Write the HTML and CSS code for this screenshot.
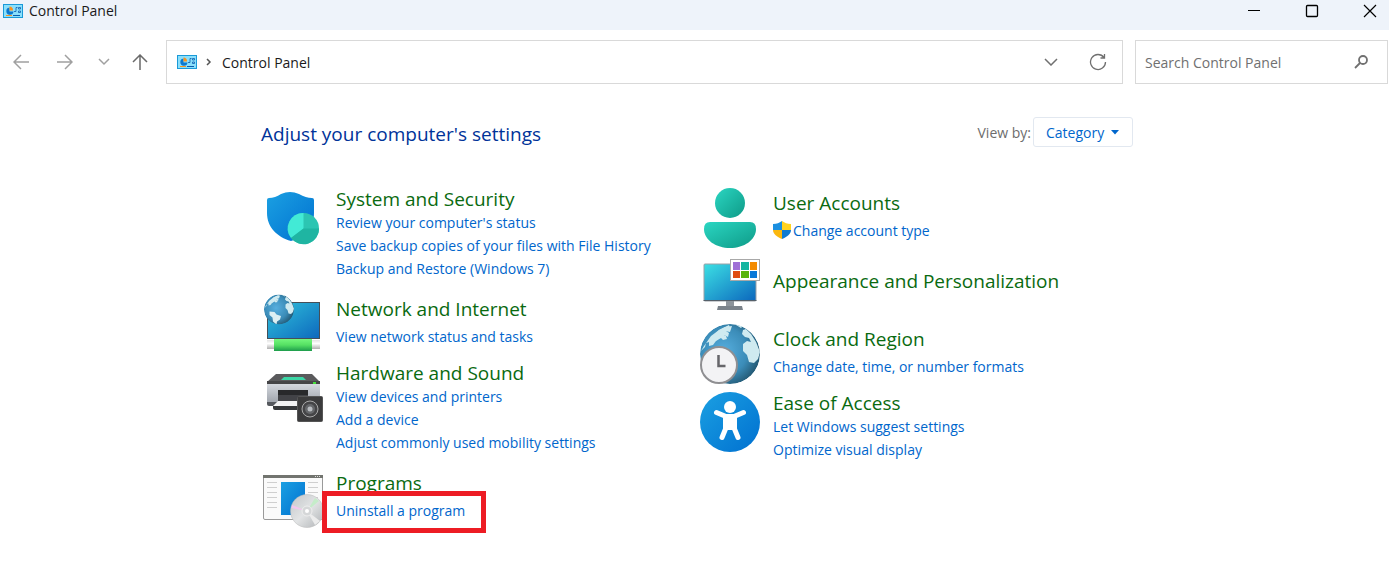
FILE: index.html
```html
<!DOCTYPE html>
<html lang="en">
<head>
    <meta charset="UTF-8">
    <meta name="viewport" content="width=device-width, initial-scale=1.0">
    <title>Control Panel</title>
    <link rel="stylesheet" href="styles.css">
</head>
<body>
<!-- shared gradients and symbols -->
<svg class="defs" aria-hidden="true">
    <defs>
        <linearGradient id="blue" x1="0" y1="0" x2="1" y2="1"><stop offset="0" stop-color="#1ba0e2"/><stop offset="1" stop-color="#0070d0"/></linearGradient>
        <linearGradient id="screen" x1="0" y1="0" x2="1" y2="1"><stop offset="0" stop-color="#3ce0e4"/><stop offset="1" stop-color="#0b66bd"/></linearGradient>
        <linearGradient id="screen-dark" x1="0" y1="0" x2="1" y2="1"><stop offset="0" stop-color="#30c4dc"/><stop offset="1" stop-color="#0d68bd"/></linearGradient>
        <linearGradient id="teal" x1="0" y1="0" x2="1" y2="1"><stop offset="0" stop-color="#2bd6c2"/><stop offset="1" stop-color="#0e9a87"/></linearGradient>
        <linearGradient id="green" x1="0" y1="0" x2="0" y2="1"><stop offset="0" stop-color="#74f67c"/><stop offset=".5" stop-color="#55e063"/><stop offset="1" stop-color="#1d9c4c"/></linearGradient>
        <linearGradient id="grey" x1="0" y1="0" x2="0" y2="1"><stop offset="0" stop-color="#d4d8de"/><stop offset="1" stop-color="#9ba0a8"/></linearGradient>
        <linearGradient id="pipe" x1="0" y1="0" x2="0" y2="1"><stop offset="0" stop-color="#e2e2e2"/><stop offset=".4" stop-color="#fff"/><stop offset="1" stop-color="#b0b0b0"/></linearGradient>
        <linearGradient id="disc" x1="0" y1="0" x2="1" y2="1"><stop offset="0" stop-color="#c2c5c8"/><stop offset=".5" stop-color="#e2e4e5"/><stop offset="1" stop-color="#aeb1b4"/></linearGradient>
        <radialGradient id="ocean" cx=".4" cy=".45" r=".65"><stop offset="0" stop-color="#56aede"/><stop offset=".6" stop-color="#3b8cb8"/><stop offset="1" stop-color="#1f5068"/></radialGradient>
        <clipPath id="round"><circle cx="32" cy="31" r="30"/></clipPath>
        <symbol id="cpl" viewBox="0 0 20 14">
            <rect x=".5" y=".5" width="19" height="13" fill="#8adffb" stroke="#1a9ad8"/>
            <path d="M6.5 3.5a3.6 3.6 0 1 0 4 4h-4z" fill="#0b78d0"/>
            <path d="M6.500 2.500v4h3.500a3.800 3.800 0 0 0-3.500-4z" fill="#f7931e"/>
            <path d="M11 7.500h2v-4h1.500M15.500 3.500h2v1.500h-2zM15.500 7h2v1.500h-2z" fill="none" stroke="#0b5cad" stroke-width=".8"/>
            <path d="M3 11.500h6" stroke="#f7931e"/><path d="M10 11.500h7" stroke="#0b5cad"/>
        </symbol>
    </defs>
</svg>

<header class="titlebar">
    <svg class="cpl-icon" aria-hidden="true"><use href="#cpl"/></svg>
    <h1>Control Panel</h1>
    <div class="window-buttons">
        <button aria-label="Minimize"><svg width="14" height="14"><path d="M1 6.500h12" stroke="#000" stroke-width="1"/></svg></button>
        <button aria-label="Maximize"><svg width="14" height="14"><rect x="1.500" y="1.500" width="11" height="11" rx="1" fill="none" stroke="#000" stroke-width="1.300"/></svg></button>
        <button aria-label="Close"><svg width="14" height="14"><path d="M1 1l12 12M13 1L1 13" stroke="#000" stroke-width="1.200"/></svg></button>
    </div>
</header>

<nav class="toolbar">
    <div class="history">
        <button aria-label="Back"><svg width="16" height="16"><path d="M16 8H1M8 1L1 8l7 7" stroke="#a0a0a0"/></svg></button>
        <button aria-label="Forward"><svg width="16" height="16"><path d="M0 8h15M8 1l7 7-7 7" stroke="#a0a0a0"/></svg></button>
        <button class="slim" aria-label="Recent locations"><svg width="12" height="8"><path d="M1 1l5 5 5-5" stroke="#a0a0a0"/></svg></button>
        <button class="slim up" aria-label="Up"><svg width="16" height="16"><path d="M8 16V1M1 8l7-7 7 7" stroke="#6a6a6a"/></svg></button>
    </div>
    <div class="address">
        <svg class="cpl-icon" aria-hidden="true"><use href="#cpl"/></svg>
        <svg class="crumb-arrow" width="6" height="8" aria-hidden="true"><path d="M1 1l3 3-3 3" stroke="#555"/></svg>
        <a href="#">Control Panel</a>
        <button aria-label="Previous locations"><svg width="14" height="8"><path d="M1 1l6 6 6-6" stroke="#707070"/></svg></button>
        <button aria-label="Refresh"><svg width="18" height="18"><path d="M15 4.500A7.500 7.500 0 1 0 16.500 9M15.500 1v4h-4" stroke="#707070" stroke-width="1.300"/></svg></button>
    </div>
    <div class="search">
        <input type="search" placeholder="Search Control Panel" aria-label="Search Control Panel">
        <button aria-label="Search"><svg width="14" height="14"><circle cx="9" cy="5" r="4" stroke="#707070" stroke-width="1.800"/><path d="M6 8l-5 5" stroke="#707070" stroke-width="1.800"/></svg></button>
    </div>
</nav>

<main class="content">
    <div class="heading">
        <h2>Adjust your computer's settings</h2>
        <div class="view-by">
            <label for="view">View by:</label>
            <div class="picker">
                <select id="view">
                    <option>Category</option>
                    <option>Large icons</option>
                    <option>Small icons</option>
                </select>
                <svg width="8" height="5" aria-hidden="true"><path d="M0 0h8L4 4.500z" fill="#0066cc"/></svg>
            </div>
        </div>
    </div>

    <div class="categories">
        <div class="column">
            <section class="category multi">
                <svg class="icon" viewBox="0 0 62 60" aria-hidden="true">
                    <path d="M20 7q9-4 18 0 7 4 13 4 2 0 2 2v13c0 14-10 24-23 28C16 50 6 40 6 26V13q0-2 2-2 6 0 12-4z" fill="url(#blue)"/>
                    <circle cx="42.500" cy="41.500" r="15.500" fill="#2cc5b2"/>
                    <path d="M42.500 41.500L30 51A15.500 15.500 0 0 1 42.500 26z" fill="#42ead6"/>
                    <path d="M42.500 41.500H58A15.500 15.500 0 0 1 30 51z" fill="#1fb5a2"/>
                </svg>
                <div class="text">
                    <h3><a href="#">System and Security</a></h3>
                    <ul>
                        <li><a href="#">Review your computer's status</a></li>
                        <li><a href="#">Save backup copies of your files with File History</a></li>
                        <li><a href="#">Backup and Restore (Windows 7)</a></li>
                    </ul>
                </div>
            </section>
            <section class="category">
                <svg class="icon" viewBox="0 0 62 60" aria-hidden="true">
                    <rect x="6.500" y="9.500" width="52" height="36" fill="url(#screen-dark)" stroke="#454f58"/>
                    <rect x="6" y="47" width="53" height="9" fill="url(#pipe)"/>
                    <rect x="13" y="46" width="38" height="12" fill="url(#green)"/>
                    <g transform="translate(2 1) scale(.5)">
                        <g clip-path="url(#round)">
                            <circle cx="32" cy="31" r="30" fill="url(#ocean)"/>
                            <use href="#land"/>
                            <path d="M13 35l10 1 4 5 9 3-2 7-6 4-1 6-7-6-1-8-6-5z" fill="#dceff3"/>
                        </g>
                    </g>
                </svg>
                <div class="text">
                    <h3><a href="#">Network and Internet</a></h3>
                    <ul>
                        <li><a href="#">View network status and tasks</a></li>
                    </ul>
                </div>
            </section>
            <section class="category multi">
                <svg class="icon" viewBox="0 0 62 60" aria-hidden="true">
                    <path d="M15 13h36l8 8H6z" fill="#5a5a5c"/>
                    <path d="M6 20h53v4H6z" fill="#454547"/>
                    <path d="M23 16h19l3 3H20z" fill="#3bd6a5"/>
                    <rect x="6" y="23" width="53" height="20" fill="url(#grey)"/>
                    <rect x="52" y="21" width="3" height="2" fill="#45e03c"/>
                    <path d="M6 41h53v2q0 2-2 2H8q-2 0-2-2z" fill="#55585e"/>
                    <path d="M17 29h30v12H17z" fill="#28292b"/>
                    <path d="M17 34h30v6H17z" fill="#424347"/>
                    <path d="M17 40h25v5H12z" fill="#f1f1f2"/>
                    <path d="M12 45h30v4H14q-2 0-2-2z" fill="#35373a"/>
                    <rect x="36.500" y="35.500" width="25" height="25" rx="1" fill="#3b3b3c" stroke="#555"/>
                    <circle cx="49" cy="48" r="8" fill="#454547" stroke="#aaa"/>
                    <circle cx="49" cy="48" r="5" fill="#66686b"/>
                    <circle cx="49" cy="48" r="2.500" fill="#b9bcc0"/>
                </svg>
                <div class="text">
                    <h3><a href="#">Hardware and Sound</a></h3>
                    <ul>
                        <li><a href="#">View devices and printers</a></li>
                        <li><a href="#">Add a device</a></li>
                        <li><a href="#">Adjust commonly used mobility settings</a></li>
                    </ul>
                </div>
            </section>
            <section class="category">
                <svg class="icon" viewBox="0 0 62 60" aria-hidden="true">
                    <rect x="2.500" y="8.500" width="59" height="44" rx="1.500" fill="#fafafa" stroke="#9a9a9a"/>
                    <path d="M2 8h60v3H2z" fill="#72746f"/>
                    <path d="M54 9.500h6" stroke="#ddd" stroke-dasharray="1 1"/>
                    <path d="M6 15.500h10M6 20.500h10M6 25.500h10M6 30.500h10M6 35.500h10M6 40.500h10M47 15.500h10M47 20.500h10M47 25.500h10M47 30.500h10" stroke="#cfcfcf"/>
                    <rect x="20" y="15" width="24" height="33" fill="url(#blue)"/>
                    <circle cx="46" cy="44" r="16.500" fill="url(#disc)" stroke="#b9b9b9" stroke-width=".5"/>
                    <path d="M46 44L31 38l-.500 3z" fill="#f3c6ee"/>
                    <path d="M46 44l8-13 4 3z" fill="#c5ecc9"/>
                    <path d="M46 44l13 10-5 4z" fill="#ececec"/>
                    <circle cx="46" cy="44" r="5" fill="#d5d7d8" stroke="#eee"/>
                    <circle cx="46" cy="44" r="2" fill="#fff"/>
                </svg>
                <div class="text">
                    <h3><a href="#">Programs</a></h3>
                    <ul>
                        <li class="marked"><a href="#">Uninstall a program</a></li>
                    </ul>
                </div>
            </section>
        </div>

        <div class="column">
            <section class="category">
                <svg class="icon" viewBox="0 0 62 60" aria-hidden="true">
                    <circle cx="32" cy="16" r="15" fill="url(#teal)"/>
                    <path d="M12 35h40q6 0 6 7c0 11-12 19-26 19S6 53 6 42q0-7 6-7z" fill="url(#teal)"/>
                </svg>
                <div class="text">
                    <h3><a href="#">User Accounts</a></h3>
                    <ul>
                        <li class="shielded">
                            <svg width="18" height="18" aria-hidden="true">
                                <path d="M9 0v9H0V3c4 0 6-1 9-3z" fill="#1b8fe0"/>
                                <path d="M9 0v9h9V3c-4 0-6-1-9-3z" fill="#ffd320"/>
                                <path d="M0 9h9v9C4 16 0 13 0 9z" fill="#fbb80f"/>
                                <path d="M18 9H9v9c5-2 9-5 9-9z" fill="#0f7bd2"/>
                            </svg>
                            <a href="#">Change account type</a>
                        </li>
                    </ul>
                </div>
            </section>
            <section class="category single">
                <svg class="icon" viewBox="0 0 62 60" aria-hidden="true">
                    <rect x="6" y="9" width="52" height="37" rx="1" fill="url(#screen)" stroke="#9aa0a6"/>
                    <path d="M5.500 45.500h53" stroke="#55606a"/>
                    <path d="M28 46h8v6h-8z" fill="#8d949b"/>
                    <path d="M20 51h24l1 4H19z" fill="#7b838b"/>
                    <rect x="32.500" y="4.500" width="29" height="21" fill="#fff" stroke="#a8a8a8"/>
                    <path d="M35 7h7v8h-7z" fill="#9f70d6"/><path d="M43 7h8v8h-8z" fill="#14b5a0"/><path d="M52 7h7v8h-7z" fill="#f38b00"/>
                    <path d="M35 16h7v7h-7z" fill="#e04c10"/><path d="M43 16h8v7h-8z" fill="#59b40c"/><path d="M52 16h7v7h-7z" fill="#0878d8"/>
                </svg>
                <div class="text">
                    <h3><a href="#">Appearance and Personalization</a></h3>
                </div>
            </section>
            <section class="category">
                <svg class="icon" viewBox="0 0 62 60" aria-hidden="true">
                    <g clip-path="url(#round)">
                        <circle cx="32" cy="31" r="30" fill="url(#ocean)"/>
                        <g id="land" fill="#cfeaf0">
                            <path d="M3 28l4-4 1-4 3-1v4l4-1 3-4 5-3 2 2 4-1-1-3-4-2 3-3 5 1 2-6-7 1-6 3-8 6-7 10z"/>
                            <path d="M14 14l7-7 10-5 1 3-4 3 3 2-1 4-4-2-4 2-3 3-4 1z"/>
                            <path d="M38 2l3-1 4 2-2 2zM45 7l3-1 5 5 5 8 4 10-2 7-4 4-5-1-2-7-4-4 0-7 4-3 4 1-2-4-4-1-3-3z"/>
                        </g>
                    </g>
                    <circle cx="21" cy="42" r="18" fill="#f3f3f5" stroke="#8f8f92" stroke-width="2"/>
                    <path d="M20.500 32v11h7" fill="none" stroke="#66666a" stroke-width="2.500"/>
                </svg>
                <div class="text">
                    <h3><a href="#">Clock and Region</a></h3>
                    <ul>
                        <li><a href="#">Change date, time, or number formats</a></li>
                    </ul>
                </div>
            </section>
            <section class="category multi">
                <svg class="icon" viewBox="0 0 62 60" aria-hidden="true">
                    <circle cx="32" cy="31" r="30" fill="url(#blue)"/>
                    <circle cx="32" cy="16" r="6" fill="#fff"/>
                    <path d="M18.500 21.500L28 25.500h8l9.500-4M27.500 27v11L24 46.500M36.500 27v11L40 46.500" fill="none" stroke="#fff" stroke-width="5" stroke-linecap="round" stroke-linejoin="round"/>
                    <path d="M27 25h10v14H27z" fill="#fff"/>
                </svg>
                <div class="text">
                    <h3><a href="#">Ease of Access</a></h3>
                    <ul>
                        <li><a href="#">Let Windows suggest settings</a></li>
                        <li><a href="#">Optimize visual display</a></li>
                    </ul>
                </div>
            </section>
        </div>
    </div>
</main>
</body>
</html>
```
FILE: styles.css
```css
*,
*::after {
    box-sizing: border-box;
}

body {
    margin: 0;
    background: #fff;
    color: #1a1a1a;
    font-family: "Open Sans", "Noto Sans", sans-serif;
    font-size: 14px;
}

h1, h2, h3, ul {
    margin: 0;
    padding: 0;
    font-weight: normal;
}

ul {
    list-style: none;
}

a {
    color: #0066cc;
    text-decoration: none;
}

a:hover {
    text-decoration: underline;
}

button {
    display: flex;
    align-items: center;
    justify-content: center;
    padding: 0;
    border: 0;
    background: none;
}

button svg,
.crumb-arrow {
    fill: none;
    stroke-width: 1.5;
}

.defs {
    position: absolute;
    width: 0;
    height: 0;
}

.cpl-icon {
    width: 20px;
    height: 14px;
    flex: none;
}

.titlebar {
    display: flex;
    align-items: center;
    gap: 6px;
    height: 30px;
    padding: 0 0 8px 3px;
    background: #eef3fa;
}

.titlebar h1 {
    font-size: 14px;
    line-height: 24px;
}

.window-buttons {
    display: flex;
    gap: 20px;
    margin-left: auto;
}

.window-buttons button {
    width: 38px;
    height: 22px;
}

.toolbar {
    display: flex;
    align-items: center;
    padding: 10px 1px 0 10px;
}

.history {
    display: flex;
    gap: 22px;
    margin-right: 18px;
}

.history button {
    width: 22px;
    height: 22px;
}

.history .slim {
    width: 12px;
}

.history .up {
    width: 16px;
}

.address,
.search {
    display: flex;
    align-items: center;
    height: 44px;
    border: 1px solid #d9d9d9;
}

.address {
    flex: 1;
    padding: 0 10px;
    margin-right: 12px;
}

.address a {
    margin-right: auto;
    color: #1a1a1a;
}

.address button {
    width: 28px;
    height: 28px;
    margin-left: 19px;
}

.crumb-arrow {
    margin: 0 10px 0 9px;
}

.search {
    width: 253px;
    padding: 0 19px 0 9px;
}

.search input {
    flex: 1;
    min-width: 0;
    padding: 0;
    border: 0;
    outline: 0;
    font: inherit;
}

.search input::placeholder {
    color: #707070;
}

.content {
    max-width: 877px;
    margin: 0 auto;
    padding: 33px 0 20px 5px;
}

.heading {
    display: flex;
    justify-content: space-between;
}

.heading h2 {
    color: #003399;
    font-size: 19px;
    line-height: 34px;
}

.view-by {
    display: flex;
    align-items: center;
    gap: 2px;
    height: 30px;
    color: #6d6d6d;
}

.picker {
    position: relative;
}

.picker select {
    width: 100px;
    height: 30px;
    padding: 0 12px;
    appearance: none;
    border: 1px solid #e2e8f0;
    border-radius: 3px;
    background: #fff;
    color: #0066cc;
    font: inherit;
}

.picker svg {
    position: absolute;
    top: 13px;
    right: 14px;
    pointer-events: none;
}

.categories {
    display: grid;
    grid-template-columns: 1fr 1fr;
    column-gap: 2px;
    margin-top: 36px;
}

.column {
    display: flex;
    flex-direction: column;
    gap: 8px;
}

.category {
    display: flex;
    align-items: center;
    gap: 13px;
    min-height: 60px;
}

.category .text {
    padding-bottom: 2px;
}

.category h3 {
    margin-bottom: 4px;
    font-size: 19px;
    line-height: 24px;
}

.category h3 a {
    color: #0a6a10;
}

.category li {
    line-height: 23px;
}

.category.multi {
    align-items: flex-start;
    padding-bottom: 3px;
}

.multi h3 {
    margin-bottom: 0;
}

.category.single .text {
    padding-bottom: 4px;
}

.icon {
    width: 62px;
    height: 60px;
    flex: none;
    overflow: visible;
}

.shielded {
    display: flex;
    align-items: center;
    gap: 2px;
}

/* red frame around the link */
.marked {
    position: relative;
}

.marked::after {
    content: "";
    position: absolute;
    top: -8px;
    left: -14px;
    width: 164px;
    height: 42px;
    border: 5px solid #ed1c24;
    pointer-events: none;
}
```
